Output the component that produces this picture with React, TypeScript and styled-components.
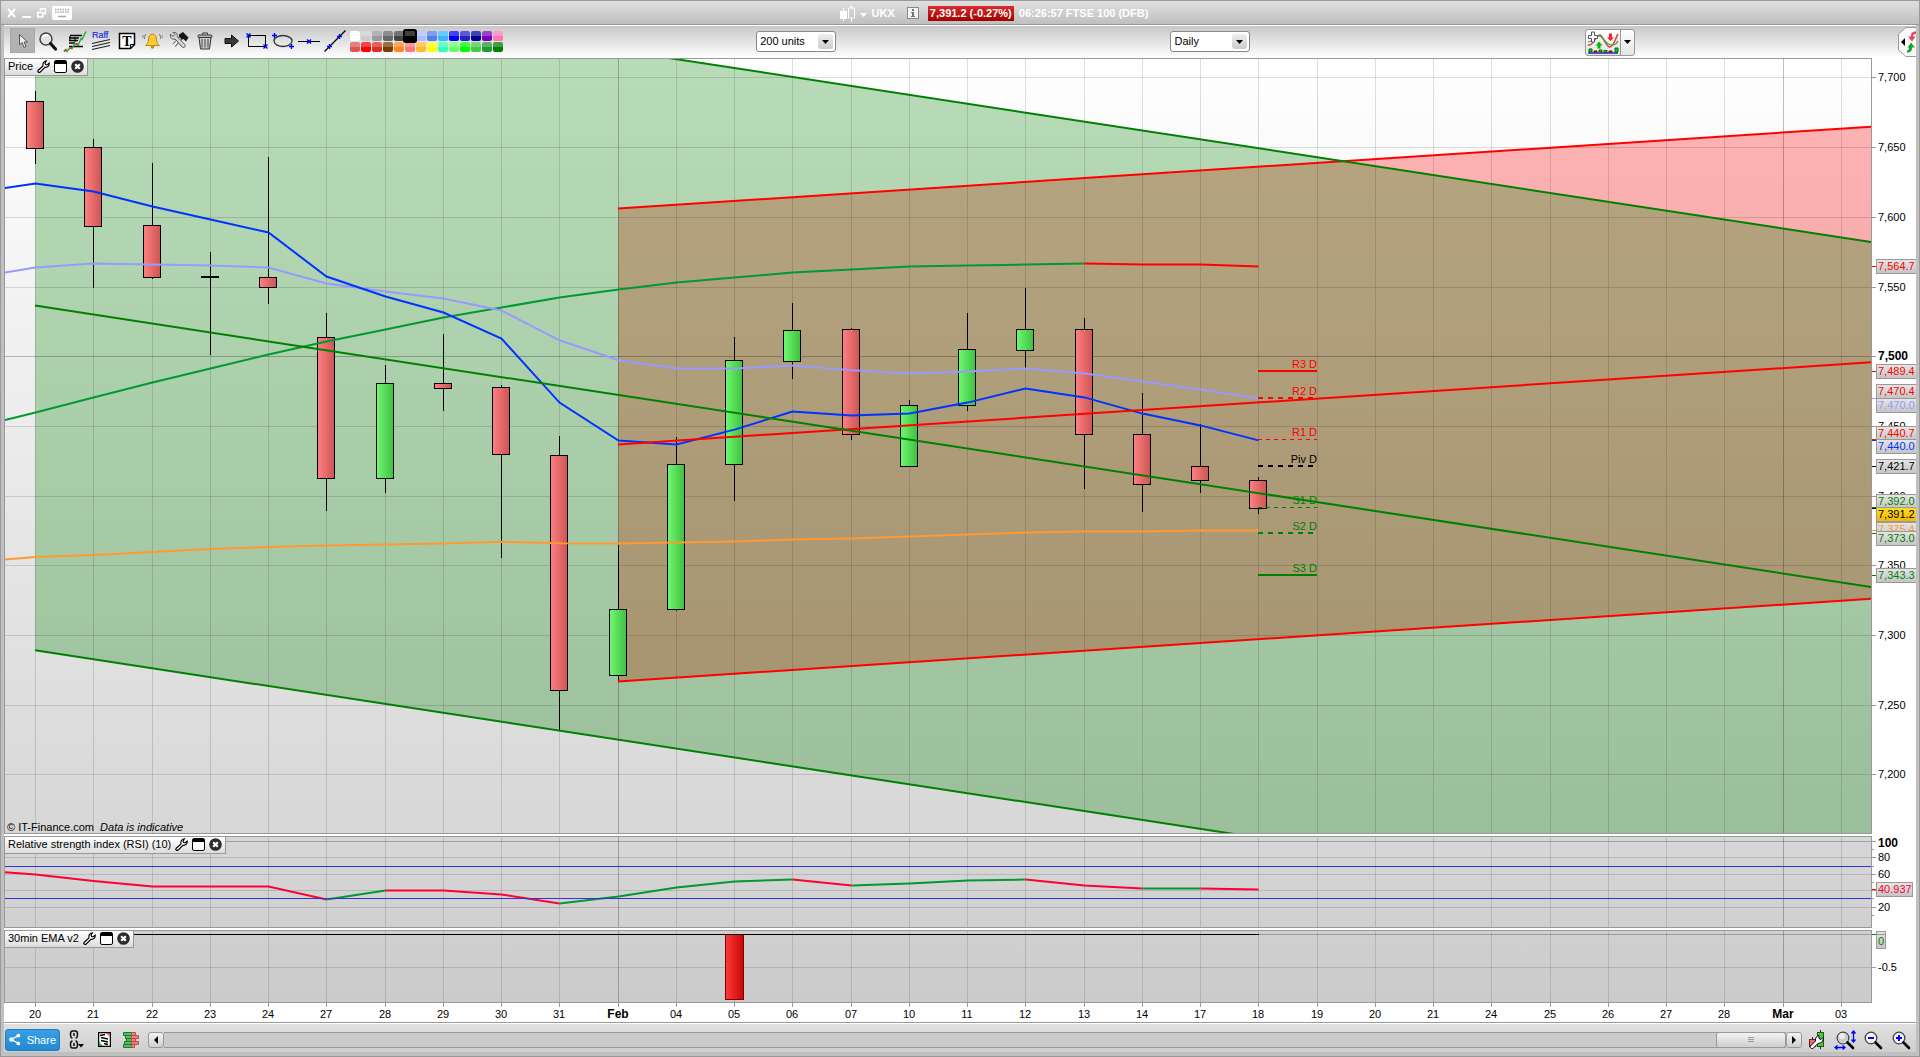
import React, { useLayoutEffect, useRef, useState } from "react";
import styled, { createGlobalStyle, css } from "styled-components";

const FONT = '"Liberation Sans", Arial, Helvetica, sans-serif';

const GlobalStyle = createGlobalStyle`
  * { box-sizing: border-box; }
  body { margin: 0; font: 11px ${FONT}; color: #000; background: #c0c0c0; }
  button, select { font: inherit; color: inherit; }
`;

/* ---------- shell ---------- */

const Window = styled.div`
  display: flex;
  flex-direction: column;
  height: 100vh;
  min-height: 480px;
  min-width: 1180px;
  border: 1px solid #999;
  background: #c0c0c0;
`;

const TitleBar = styled.header`
  display: grid;
  grid-template-columns: 1fr auto 1fr;
  align-items: center;
  height: 24px;
  padding: 1px 6px 0;
  border-bottom: 1px solid #999;
  background: linear-gradient(#e0e0e0, #bfbfbf);
`;

const WindowButtons = styled.div`
  display: flex;
  align-items: center;
  gap: 6px;
`;

const PlainButton = styled.button`
  display: inline-flex;
  align-items: center;
  justify-content: center;
  padding: 0;
  border: 0;
  background: none;
  cursor: pointer;
`;

const Title = styled.h1`
  display: flex;
  align-items: center;
  margin: 0;
  padding-left: 68px;
  font-size: 11px;
  font-weight: bold;
  line-height: 15px;
  color: #fff;
`;

const SymbolName = styled.span`
  margin: 0 12px 0 4px;
`;

const Quote = styled.span`
  margin: 0 5px 0 9px;
  padding: 0 2px;
  background: linear-gradient(#dc2a2a, #a00000);
`;

const Body = styled.main`
  flex: 1;
  display: flex;
  flex-direction: column;
  min-height: 0;
  margin: 0 3px 4px;
  background: #fff;
`;

/* ---------- top toolbar ---------- */

const Toolbar = styled.div`
  flex: none;
  display: flex;
  align-items: center;
  height: 33px;
  padding-left: 6px;
  border-top: 1px solid #fff;
  background: linear-gradient(#c8c8c8, #ffffff);
`;

const ToolGroup = styled.div`
  display: flex;
  gap: 1px;
  margin-bottom: 3px;
`;

const ToolButton = styled(PlainButton)<{ $active?: boolean }>`
  width: 25px;
  height: 25px;
  ${(p) => p.$active && css`background: #b2b2b2; box-shadow: inset 0 0 0 1px #a8a8a8;`}
`;

const Palette = styled.div`
  display: grid;
  grid-template-columns: repeat(14, 10px);
  gap: 1px;
  margin: 0 0 1px 3px;
`;

const Swatch = styled.button<{ $color: string; $selected?: boolean }>`
  width: 10px;
  height: 10px;
  padding: 0;
  border: 0;
  border-radius: 2px;
  background: linear-gradient(rgba(255, 255, 255, 0.25) 50%, transparent 50%) ${(p) => p.$color};
  ${(p) => p.$selected && css`position: relative; border-radius: 1px; box-shadow: 0 0 0 2px #000;`}
`;

const Spacer = styled.div<{ $grow: number }>`
  flex: ${(p) => p.$grow} 1 0;
`;

const Dropdown = styled.label`
  display: flex;
  position: relative;
  margin-bottom: 1px;
`;

const Select = styled.select`
  appearance: none;
  width: 80px;
  height: 21px;
  padding: 0 20px 1px 3px;
  border: 1px solid #888;
  border-radius: 3px;
  background: #fff;
`;

const DropdownArrow = styled.span`
  position: absolute;
  top: 3px;
  right: 3px;
  display: flex;
  align-items: center;
  justify-content: center;
  width: 15px;
  height: 15px;
  border-radius: 3px;
  background: linear-gradient(#eee, #ccc);
  pointer-events: none;
`;

const SplitButton = styled.div`
  display: flex;
  height: 27px;
  border: 1px solid #999;
  border-radius: 3px;
  background: linear-gradient(#fff, #e4e4e4);
`;

const SplitPart = styled(PlainButton)<{ $wide?: boolean }>`
  width: ${(p) => (p.$wide ? 35 : 13)}px;
  ${(p) => p.$wide && css`border-right: 1px solid #999;`}
`;

/* ---------- chart panels ---------- */

const Panel = styled.section<{ $height?: number; $last?: boolean }>`
  position: relative;
  ${(p) => (p.$height ? css`flex: none; height: ${p.$height}px;` : css`flex: 1; min-height: 0;`)}
  margin-bottom: ${(p) => (p.$last ? 0 : 2)}px;
`;

const ChartSvg = styled.svg`
  display: block;
  width: 100%;
  height: 100%;
  font: 11px ${FONT};
`;

const Caption = styled.div`
  position: absolute;
  top: 0;
  left: 0;
  display: flex;
  align-items: flex-start;
  gap: 4px;
  height: 18px;
  padding: 1px 3px;
  border: 1px solid #999;
  background: linear-gradient(#fff, #dcdcdc);
  white-space: pre;
`;

const CaptionTitle = styled.h2`
  margin: 0;
  font-size: 11px;
  font-weight: normal;
  line-height: 13px;
`;

const Credit = styled.p`
  position: absolute;
  left: 3px;
  bottom: 1px;
  margin: 0;
  font-size: 11px;
  line-height: 12px;
  white-space: pre;
`;

const TimeAxisRow = styled.div`
  flex: none;
  height: 20px;
  border-bottom: 1px solid #999;
`;

/* ---------- bottom bar ---------- */

const BottomBar = styled.footer`
  flex: none;
  display: flex;
  align-items: center;
  gap: 7px;
  height: 29px;
  padding: 3px 4px 0 1px;
  border-top: 1px solid #fff;
  background: linear-gradient(#e0e0e0, #cfcfcf);
`;

const ShareButton = styled.button`
  display: flex;
  align-items: center;
  gap: 6px;
  width: 55px;
  height: 22px;
  padding: 0 3px;
  border: 1px solid #1c7fc4;
  border-radius: 3px;
  background: linear-gradient(#38a0e6, #2388cf);
  color: #fff;
`;

const FooterButton = styled(PlainButton)<{ $w: number }>`
  width: ${(p) => p.$w}px;
  height: 22px;
`;

const ScrollBar = styled.div`
  flex: 1;
  display: flex;
  height: 16px;
`;

const ScrollTrack = styled.div`
  flex: 1;
  display: flex;
  justify-content: flex-end;
  border: solid #999;
  border-width: 1px 0;
  background: #cbcbcb;
`;

const scrollFace = css`
  border: 1px solid #999;
  border-radius: 3px;
  background: linear-gradient(#f4f4f4, #cfcfcf);
`;

const ScrollButton = styled(PlainButton)`
  width: 16px;
  ${scrollFace}
`;

const ScrollThumb = styled.div`
  display: flex;
  flex-direction: column;
  align-items: center;
  justify-content: center;
  gap: 1px;
  width: 70px;
  margin: -1px 0;
  ${scrollFace}
`;

const Grip = styled.i`
  width: 6px;
  height: 1px;
  background: #999;
`;

const ZoomGroup = styled.div`
  display: flex;
  gap: 6px;
  margin-left: -3px;
`;

/* ---------- chart geometry ---------- */

/* The series below are stored on a 1920-wide drawing sheet; each panel
   maps them to whatever room it has been given. */
const SHEET_LEFT = 4;
const SHEET_PLOT = 1868;
const AXIS_WIDTH = 44;
const MINOR = 0.13;
const MAJOR = 0.25;

const DAYS = [
  "20", "21", "22", "23", "24", "27", "28", "29", "30", "31", "Feb", "04", "05", "06", "07", "10",
  "11", "12", "13", "14", "17", "18", "19", "20", "21", "24", "25", "26", "27", "28", "Mar", "03",
];
const dayX = (i: number) => Math.floor(35.5 + 58.25 * i);

type Point = [number, number];
const series = (start: number, ys: number[], first = 0): Point[] => [
  ...(first ? ([[5, first]] as Point[]) : []),
  ...ys.map((y, i): Point => [dayX(start + i) + 0.5, y]),
];

// high, body top, body bottom, low, rising
type Candle = [number, number, number, number, boolean];
const CANDLES: Candle[] = [
  [91, 101, 149, 164, false],
  [139, 147, 227, 288, false],
  [163, 225, 278, 279, false],
  [252, 276, 278, 355, false],
  [157, 277, 288, 304, false],
  [313, 337, 479, 511, false],
  [365, 383, 479, 493, true],
  [334, 383, 389, 411, false],
  [385, 387, 455, 558, false],
  [436, 455, 691, 731, false],
  [545, 609, 676, 682, true],
  [437, 464, 610, 611, true],
  [337, 360, 465, 501, true],
  [303, 330, 362, 379, true],
  [328, 329, 435, 440, false],
  [400, 405, 467, 467, true],
  [313, 349, 406, 411, true],
  [288, 329, 351, 368, true],
  [318, 329, 435, 489, false],
  [393, 434, 485, 512, false],
  [424, 466, 481, 493, false],
  [477, 480, 509, 514, false],
];

const LINES: { color: string; points: Point[] }[] = [
  {
    color: "#ff9933",
    points: series(0, [557, 555, 552, 549, 547, 545.5, 544.5, 543.5, 541.7, 543.3, 543.5, 542.6, 541.5, 539.6, 538.4, 536.6, 534.6, 532.6, 531.5, 531.5, 530.6, 530.5], 559.5),
  },
  {
    color: "#009933",
    points: series(0, [412.5, 397.5, 382.5, 368.5, 354.5, 341.5, 329.5, 317.5, 307.5, 297.5, 289.5, 282.5, 277.5, 272.5, 269.5, 266.5, 265.5, 264.5, 263.5], 420),
  },
  { color: "#ff0000", points: series(18, [263.5, 264.5, 264.5, 266.5]) },
  {
    color: "#9999ff",
    points: series(0, [267.5, 263.5, 264.5, 265.5, 267.5, 283.5, 291.5, 298.5, 310.5, 340.3, 360.3, 368.5, 368.5, 365.6, 370.3, 373.4, 371.5, 368.4, 373.6, 381.5, 389.5, 398.4], 272.5),
  },
  {
    color: "#0033ff",
    points: series(0, [183.5, 191.5, 206.5, 219.5, 232.5, 276.5, 296.5, 312.5, 338.5, 402.6, 440.5, 444.4, 429.6, 411.6, 415.5, 413.6, 402.6, 388.5, 397.4, 413.6, 425.4, 440.4], 188),
  },
];

const GREEN_CHANNEL: [Point, Point][] = [
  [[35, -39], [1871, 242]],
  [[35, 305.6], [1871, 587]],
  [[35, 650.3], [1871, 931.6]],
];
const RED_CHANNEL: [Point, Point][] = [
  [[618, 208.6], [1871, 126.7]],
  [[618, 444.4], [1871, 362.3]],
  [[618, 681.4], [1871, 598.8]],
];

const PIVOTS = [
  { name: "R3 D", y: 371, color: "#ff0000", w: 2, dash: "" },
  { name: "R2 D", y: 398, color: "#ff0000", w: 2, dash: "5 5" },
  { name: "R1 D", y: 439.5, color: "#ff0000", w: 1, dash: "4 4" },
  { name: "Piv D", y: 466, color: "#000000", w: 2, dash: "5 5" },
  { name: "S1 D", y: 507.5, color: "#008000", w: 1, dash: "4 4" },
  { name: "S2 D", y: 533, color: "#008000", w: 2, dash: "5 5" },
  { name: "S3 D", y: 575, color: "#008000", w: 2, dash: "" },
];

const PRICE_LEVELS = [
  { label: "7,700", y: 77 }, { label: "7,650", y: 147 }, { label: "7,600", y: 217 },
  { label: "7,550", y: 287 }, { label: "7,500", y: 356, major: true }, { label: "7,450", y: 426 },
  { label: "7,400", y: 496 }, { label: "7,350", y: 565 }, { label: "7,300", y: 635 },
  { label: "7,250", y: 705 }, { label: "7,200", y: 774 },
];

const PRICE_TAGS = [
  { label: "7,564.7", top: 259, mark: 266, color: "#ff0000" },
  { label: "7,489.4", top: 364, mark: 371, color: "#ff0000" },
  { label: "7,470.4", top: 384, mark: 398, color: "#ff0000" },
  { label: "7,470.0", top: 398, mark: 398, color: "#9999ff" },
  { label: "7,440.7", top: 426, mark: 439, color: "#ff0000" },
  { label: "7,440.0", top: 439, mark: 440, color: "#0033ff" },
  { label: "7,421.7", top: 459, mark: 466, color: "#000000" },
  { label: "7,375.4", top: 522, mark: 530, color: "#ff9933" },
  { label: "7,392.0", top: 494, mark: 507, color: "#008000" },
  { label: "7,391.2", top: 507, mark: 508, color: "#000000", live: true },
  { label: "7,373.0", top: 531, mark: 533, color: "#008000" },
  { label: "7,343.3", top: 568, mark: 575, color: "#008000" },
];

const RED = "#ff0033";
const GREEN = "#009933";
const RSI_VALUES = [874.5, 881, 886.5, 886.5, 886.5, 899.4, 890.5, 890.5, 894.5, 903.5, 896.6, 887.5, 881.5, 879.5, 885.5, 883.4, 880.5, 879.5, 885.4, 888.5, 888.5, 889.5];
const RSI_RUNS = [
  { from: 0, to: 5, color: RED, lead: 872.2 },
  { from: 5, to: 6, color: GREEN },
  { from: 6, to: 9, color: RED },
  { from: 9, to: 13, color: GREEN },
  { from: 13, to: 14, color: RED },
  { from: 14, to: 17, color: GREEN },
  { from: 17, to: 19, color: RED },
  { from: 19, to: 20, color: GREEN },
  { from: 20, to: 21, color: RED },
];

interface Box { w: number; h: number }

function useBox() {
  const ref = useRef<HTMLElement | null>(null);
  const [box, setBox] = useState<Box>({ w: 1912, h: 100 });
  useLayoutEffect(() => {
    const el = ref.current;
    if (!el) return;
    const read = () => setBox({ w: el.clientWidth, h: el.clientHeight });
    read();
    const watcher = new ResizeObserver(read);
    watcher.observe(el);
    return () => watcher.disconnect();
  }, []);
  return [ref, box] as const;
}

function scales(box: Box, top: number, sheetHeight: number) {
  const kx = (box.w - AXIS_WIDTH) / SHEET_PLOT;
  const ky = box.h / sheetHeight;
  const x = (v: number) => (v - SHEET_LEFT) * kx;
  const y = (v: number) => (v - top) * ky;
  return {
    x, y,
    px: (v: number) => Math.round(x(v)) + 0.5,
    py: (v: number) => Math.round(y(v)) + 0.5,
    path: (pts: Point[]) => pts.map((p) => `${x(p[0])},${y(p[1])}`).join(" "),
    plot: box.w - AXIS_WIDTH,
  };
}

type Scales = ReturnType<typeof scales>;

function Frame({ id, s, box, from, to }: { id: string; s: Scales; box: Box; from: string; to: string }) {
  return (
    <>
      <defs>
        <linearGradient id={`${id}-bg`} x1="0" y1="0" x2="0" y2="1">
          <stop offset="0" stopColor={from} />
          <stop offset="1" stopColor={to} />
        </linearGradient>
        <clipPath id={`${id}-clip`}>
          <rect x={1} y={1} width={s.plot - 2} height={box.h - 2} />
        </clipPath>
      </defs>
      <rect x={0.5} y={0.5} width={s.plot - 1} height={box.h - 1} fill={`url(#${id}-bg)`} stroke="#999" />
    </>
  );
}

function DayGrid({ s, h }: { s: Scales; h: number }) {
  return (
    <>
      {DAYS.map((d, i) => (
        <line key={i} x1={s.px(dayX(i))} x2={s.px(dayX(i))} y1={0} y2={h} stroke="#000" strokeOpacity={d.length > 2 ? MAJOR : MINOR} />
      ))}
    </>
  );
}

function AxisTick({ s, y, color = "#999", short }: { s: Scales; y: number; color?: string; short?: boolean }) {
  return <line x1={s.plot} x2={s.plot + (short ? 2 : 4)} y1={s.py(y)} y2={s.py(y)} stroke={color} />;
}

function Tag({ s, top, width = 41, label, color, live, height = 15 }: { s: Scales; top: number; width?: number; label: string; color: string; live?: boolean; height?: number }) {
  const y = Math.round(s.y(top));
  return (
    <g>
      <rect x={s.plot + 4.5} y={y + 0.5} width={width - 1} height={height - 1} fill={live ? "url(#live-tag)" : "url(#tag)"} stroke="#999" />
      <text x={s.plot + 6} y={y + height - 4} fill={color}>{label}</text>
    </g>
  );
}

function PriceChart() {
  const [ref, box] = useBox();
  const s = scales(box, 58, 776);
  const fill = (ch: [Point, Point][]) => s.path([ch[0][0], ch[0][1], ch[2][1], ch[2][0]]);
  return (
    <Panel ref={ref as React.RefObject<HTMLElement>} aria-label="Price">
      <ChartSvg>
        <Frame id="price" s={s} box={box} from="#ffffff" to="#d7d7d7" />
        <defs>
          <linearGradient id="bear"><stop offset="0" stopColor="#ff8080" /><stop offset="1" stopColor="#cc5555" /></linearGradient>
          <linearGradient id="bull"><stop offset="0" stopColor="#70f870" /><stop offset="1" stopColor="#40c040" /></linearGradient>
          <linearGradient id="tag" x1="0" y1="0" x2="0" y2="1"><stop offset="0" stopColor="#e6e6e6" /><stop offset="1" stopColor="#c4c4c4" /></linearGradient>
          <linearGradient id="live-tag" x1="0" y1="0" x2="0" y2="1"><stop offset="0" stopColor="#ffdd22" /><stop offset="1" stopColor="#f4b800" /></linearGradient>
        </defs>
        <g clipPath="url(#price-clip)">
          <polygon points={fill(RED_CHANNEL)} fill="#f00" fillOpacity={0.29} />
          <polygon points={fill(GREEN_CHANNEL)} fill="#008000" fillOpacity={0.28} />
          <DayGrid s={s} h={box.h} />
          {PRICE_LEVELS.map((l) => (
            <line key={l.label} x1={0} x2={s.plot} y1={s.py(l.y)} y2={s.py(l.y)} stroke="#000" strokeOpacity={l.major ? MAJOR : MINOR} />
          ))}
          {CANDLES.map(([high, top, bottom, low, up], i) => {
            const cx = s.px(dayX(i));
            const t = Math.round(s.y(top));
            const b = Math.round(s.y(bottom));
            return (
              <g key={i} stroke="#000">
                <line x1={cx} x2={cx} y1={s.y(high)} y2={s.y(low)} />
                {b - t > 2
                  ? <rect x={cx - 9} y={t + 0.5} width={17} height={b - t - 1} fill={up ? "url(#bull)" : "url(#bear)"} />
                  : <rect x={cx - 9.5} y={t} width={18} height={2} fill="#000" stroke="none" />}
              </g>
            );
          })}
          {LINES.map((l, i) => (
            <polyline key={i} points={s.path(l.points)} fill="none" stroke={l.color} strokeWidth={2} />
          ))}
          {[...RED_CHANNEL.map((p) => ({ p, c: "#ff0000" })), ...GREEN_CHANNEL.map((p) => ({ p, c: "#008000" }))].map(({ p, c }, i) => (
            <polyline key={i} points={s.path(p)} fill="none" stroke={c} strokeWidth={2} />
          ))}
          {PIVOTS.map((p) => (
            <g key={p.name}>
              <line x1={s.x(1258)} x2={s.x(1317)} y1={s.y(p.y)} y2={s.y(p.y)} stroke={p.color} strokeWidth={p.w} strokeDasharray={p.dash || undefined} />
              <text x={s.x(1317)} y={s.y(Math.floor(p.y) - 3)} fill={p.color} textAnchor="end">{p.name}</text>
            </g>
          ))}
        </g>
        {PRICE_LEVELS.map((l) => (
          <g key={l.label}>
            <AxisTick s={s} y={l.y} />
            <text x={s.plot + 6} y={s.y(l.y + 4)} fontWeight={l.major ? "bold" : undefined} fontSize={l.major ? 12 : undefined}>{l.label}</text>
          </g>
        ))}
        {PRICE_TAGS.map((t) => (
          <g key={t.label}>
            <AxisTick s={s} y={t.mark} color={t.color} />
            <Tag s={s} top={t.top} label={t.label} color={t.color} live={t.live} />
          </g>
        ))}
      </ChartSvg>
      <PanelCaption title="Price" />
      <Credit>© IT-Finance.com  <em>Data is indicative</em></Credit>
    </Panel>
  );
}

const RSI_LEVELS = [
  { label: "100", y: 841, major: true }, { label: "", y: 849, half: true }, { label: "80", y: 857 },
  { label: "", y: 866, half: true }, { label: "60", y: 874 }, { label: "", y: 882, half: true },
  { label: "", y: 890 }, { label: "", y: 898, half: true }, { label: "20", y: 907 }, { label: "", y: 915, half: true },
];

function RsiChart() {
  const [ref, box] = useBox();
  const s = scales(box, 836, 92);
  return (
    <Panel ref={ref as React.RefObject<HTMLElement>} $height={92} aria-label="Relative strength index">
      <ChartSvg>
        <Frame id="rsi" s={s} box={box} from="#d7d7d7" to="#d0d0d0" />
        <g clipPath="url(#rsi-clip)">
          <DayGrid s={s} h={box.h} />
          {RSI_LEVELS.filter((l) => !l.half).map((l) => (
            <line key={l.y} x1={0} x2={s.plot} y1={s.py(l.y)} y2={s.py(l.y)} stroke="#000" strokeOpacity={l.major ? MAJOR : MINOR} />
          ))}
          {RSI_RUNS.map((r) => (
            <polyline key={r.from} points={s.path(series(r.from, RSI_VALUES.slice(r.from, r.to + 1), r.lead))} fill="none" stroke={r.color} strokeWidth={2} />
          ))}
          {[866, 898].map((y) => (
            <line key={y} x1={0} x2={s.plot} y1={s.py(y)} y2={s.py(y)} stroke="#3333dd" />
          ))}
        </g>
        {RSI_LEVELS.map((l) => (
          <g key={l.y}>
            <AxisTick s={s} y={l.y} short={l.half} />
            <text x={s.plot + 6} y={s.y(l.y + (l.major ? 6 : 4))} fontWeight={l.major ? "bold" : undefined} fontSize={l.major ? 12 : undefined}>{l.label}</text>
          </g>
        ))}
        <AxisTick s={s} y={889} color={RED} />
        <Tag s={s} top={882} width={37} label="40.937" color={RED} />
      </ChartSvg>
      <PanelCaption title="Relative strength index (RSI) (10)" />
    </Panel>
  );
}

function EmaChart() {
  const [ref, box] = useBox();
  const s = scales(box, 930, 73);
  return (
    <Panel ref={ref as React.RefObject<HTMLElement>} $height={73} $last aria-label="30min EMA v2">
      <ChartSvg>
        <defs>
          <linearGradient id="ema-bar"><stop offset="0" stopColor="#ff3838" /><stop offset="1" stopColor="#c80808" /></linearGradient>
        </defs>
        <Frame id="ema" s={s} box={box} from="#d0d0d0" to="#cbcbcb" />
        <g clipPath="url(#ema-clip)">
          <DayGrid s={s} h={box.h} />
          <line x1={0} x2={s.plot} y1={s.py(934)} y2={s.py(934)} stroke="#000" strokeOpacity={MAJOR} />
          <line x1={0} x2={s.plot} y1={s.py(967)} y2={s.py(967)} stroke="#000" strokeOpacity={MINOR} />
          <rect x={s.px(dayX(12)) - 9} y={s.py(934)} width={18} height={s.y(999) - s.y(934)} fill="url(#ema-bar)" stroke="#800000" />
          <line x1={0} x2={s.x(1259)} y1={s.py(934)} y2={s.py(934)} stroke="#000" />
        </g>
        <AxisTick s={s} y={967} />
        <text x={s.plot + 6} y={s.y(971)}>-0.5</text>
        <AxisTick s={s} y={934} color="#008000" />
        <Tag s={s} top={931} width={10} height={18} label="0" color="#008000" />
        <line x1={s.plot + 4} x2={s.plot + 14} y1={s.py(934)} y2={s.py(934)} stroke="#999" />
      </ChartSvg>
      <PanelCaption title="30min EMA v2" />
    </Panel>
  );
}

function TimeAxis() {
  const [ref, box] = useBox();
  const s = scales({ w: box.w, h: 19 }, 1003, 19);
  return (
    <TimeAxisRow ref={ref as React.RefObject<HTMLDivElement>}>
      <ChartSvg>
        {DAYS.map((d, i) => (
          <g key={i}>
            <line x1={s.px(dayX(i))} x2={s.px(dayX(i))} y1={0} y2={4} stroke="#999" />
            <text x={s.x(dayX(i))} y={15} textAnchor="middle" fontWeight={d.length > 2 ? "bold" : undefined} fontSize={d.length > 2 ? 12 : undefined}>{d}</text>
          </g>
        ))}
      </ChartSvg>
    </TimeAxisRow>
  );
}

/* ---------- icons ---------- */

const Caret = ({ color = "#000" }: { color?: string }) => (
  <svg width="7" height="4"><path d="M0 0h7L3.5 4z" fill={color} /></svg>
);

function PanelCaption({ title }: { title: string }) {
  return (
    <Caption>
      <CaptionTitle>{title}</CaptionTitle>
      <PlainButton aria-label={`${title} settings`}>
        <svg width="13" height="13" viewBox="0 0 13 13">
          <path d="M1 10.500 6 6C5.400 3.600 6.600 1.200 9.400.8L8 3.200l.6 1.300 1.500.3L12.200 3c.4 3-1.800 4.800-4.300 4.300L3 12.200c-1.300.6-2.600-.6-2-1.700z" fill="#fff" stroke="#000" strokeWidth="1.100" />
        </svg>
      </PlainButton>
      <PlainButton aria-label={`Detach ${title}`}>
        <svg width="13" height="13"><rect x=".5" y=".5" width="12" height="12" rx="1.500" fill="#fff" stroke="#000" /><path d="M1 1h11v3H1z" /></svg>
      </PlainButton>
      <PlainButton aria-label={`Close ${title}`}>
        <svg width="13" height="13"><circle cx="6.500" cy="6.500" r="6.300" fill="#2c2c2c" /><path d="M4.200 4.200l4.600 4.600M8.800 4.200 4.200 8.800" stroke="#fff" strokeWidth="2.200" /></svg>
      </PlainButton>
    </Caption>
  );
}

const Icon = ({ children }: { children: React.ReactNode }) => (
  <svg width="25" height="25" viewBox="0 0 25 25">{children}</svg>
);

const BLUE = "#0000ff";

const TOOLS: { name: string; art: React.ReactNode }[] = [
  { name: "Pointer", art: <path d="M9.500 6.500v10.500l2.500-2.500 2 5 2-1-2-4.500h3.500z" fill="#eee" stroke="#555" /> },
  {
    name: "Zoom",
    art: (
      <>
        <circle cx="10" cy="11" r="6" fill="#e2e2e2" stroke="#444" strokeWidth="1.500" />
        <path d="M6.500 9.500c1-2.500 4-3 5.500-2" stroke="#fff" strokeWidth="2" fill="none" />
        <path d="M14.500 15.500l5 5.500" stroke="#111" strokeWidth="3.200" strokeLinecap="round" />
      </>
    ),
  },
  {
    name: "Indicators",
    art: (
      <>
        <path d="M8 7.500h12M7 10h10M7 12.500h9M7 15h6M7 18.500h14" stroke="#000" strokeWidth="1.400" />
        <path d="M8 8v4M13 9v5" stroke="#000" />
        <path d="M2 23.500l2-2 1 2 3-4 2 1 3-5 3 2 3-7 1 1 4-8" stroke="#1eb43c" strokeWidth="1.500" fill="none" />
        <path d="M2 23.500l2-2M8 19.500l2 1M14 15.500l2 1" stroke="#f22" strokeWidth="1.500" />
      </>
    ),
  },
  {
    name: "Raff channel",
    art: (
      <>
        <text x="4" y="10" fontSize="9" fill="#1a2fe0" stroke="#1a2fe0" strokeWidth=".2" fontFamily={FONT}>Raff</text>
        <path d="M4 15.500l18-4M4 18.500l18-4M4 21.500l18-4" stroke="#222" strokeWidth="1.200" />
      </>
    ),
  },
  {
    name: "Text",
    art: (
      <>
        <path d="M5.500 5.500h15v11l-4 4h-11z" fill="#fff" stroke="#000" strokeWidth="1.500" />
        <path d="M20.500 16.500h-4v4" fill="none" stroke="#000" />
        <text x="13" y="18" textAnchor="middle" fontSize="14" fontWeight="bold" fontFamily='"Liberation Serif", serif'>T</text>
      </>
    ),
  },
  {
    name: "Alert",
    art: (
      <>
        <path d="M12.500 6c-3 .5-4 3-4 6 0 2.500-1.500 4-3 5.500h14c-1.500-1.500-3-3-3-5.500 0-3-1-5.500-4-6z" fill="#fc3" stroke="#b58a10" />
        <circle cx="12.500" cy="19" r="1.800" fill="#c89010" />
        <path d="M6 6c-1 1-2 3-1.500 5M3.500 7c-.8 1-1 2-.8 3M19 6c1 1 2 3 1.500 5M21.500 7c.8 1 1 2 .8 3" stroke="#777" fill="none" />
      </>
    ),
  },
  {
    name: "Tools",
    art: (
      <>
        <path d="M8 17.500l7-8" stroke="#444" strokeWidth="4" />
        <path d="M6.500 19l8-9" stroke="#f2f2f2" strokeWidth="2.500" />
        <path d="M13 6.500l4-2.500 5.500 5.500-2.500 4-2.500-2.500-1.500.5-3-3z" fill="#151515" />
        <path d="M4.500 6l2.500 2.500L9 6.500 7 4.500c3-.8 5 1.500 4.200 4l7.500 8c1.500 2-.7 4-2.500 2.500l-7-8c-3 1-5.500-1.500-4.700-5z" fill="#d8d8d8" stroke="#555" />
      </>
    ),
  },
  {
    name: "Delete",
    art: (
      <>
        <path d="M7 9.500h12l-1.500 11.500h-9z" fill="#ccc" stroke="#333" />
        <path d="M10 11v8.500M13 11v8.500M16 11v8.500" stroke="#444" />
        <rect x="6" y="7" width="14" height="2.500" rx="1" fill="#bbb" stroke="#333" />
        <path d="M10.500 6.500v-1.500h5v1.500" fill="none" stroke="#333" />
      </>
    ),
  },
  { name: "Arrow", art: <path d="M7 10.500h6.500v-3.500l7 6-7 6v-3.500H7z" fill="#3a3a3a" stroke="#111" /> },
  {
    name: "Rectangle",
    art: (
      <>
        <rect x="4.500" y="7.500" width="17" height="11" fill="none" stroke="#000" />
        <path d="M2.500 5.500l4 4m0-4l-4 4M19.500 16.500l4 4m0-4l-4 4" stroke={BLUE} strokeWidth="1.400" />
      </>
    ),
  },
  {
    name: "Ellipse",
    art: (
      <>
        <ellipse cx="13" cy="13" rx="9" ry="5.500" fill="none" stroke="#333" strokeWidth="1.300" />
        <path d="M2 7.500h5M4.500 5v5M19 18.500h5M21.500 16v5" stroke={BLUE} strokeWidth="1.400" />
      </>
    ),
  },
  {
    name: "Horizontal line",
    art: (
      <>
        <path d="M2 13.500h22" stroke="#000" />
        <path d="M11 11.500l4 4m0-4l-4 4" stroke={BLUE} strokeWidth="1.400" />
      </>
    ),
  },
  {
    name: "Line",
    art: (
      <>
        <path d="M2.500 23.500l21-21" stroke="#000" strokeWidth="1.300" />
        <path d="M5 18.500h5M7.500 16v5M15 8.500h5M17.500 6v5" stroke={BLUE} strokeWidth="1.400" />
      </>
    ),
  },
];

const COLORS = [
  "#ffffff", "#cccccc", "#999999", "#666666", "#444444", "#000000", "#a8bcff", "#4d7dee", "#33b8ff", "#0000ff", "#2222cc", "#000099", "#7700bb", "#ff77bb",
  "#dd5555", "#ff0000", "#e02c22", "#773c00", "#ff8822", "#ff7777", "#ffb833", "#ffff00", "#33ffbb", "#66ff66", "#00ff00", "#44cc44", "#229933", "#008000",
];

const Magnifier = ({ children }: { children?: React.ReactNode }) => (
  <svg width="22" height="22" viewBox="0 0 22 22">
    <circle cx="9" cy="9" r="5.800" fill="#f4f4f4" stroke="#444" strokeWidth="1.300" />
    {children}
    <path d="M13.500 13.500l5.500 5.500" stroke="#000" strokeWidth="2.600" strokeLinecap="round" />
  </svg>
);

/* ---------- page ---------- */

function TopTitle() {
  return (
    <TitleBar>
      <WindowButtons>
        <PlainButton aria-label="Close"><svg width="9" height="10"><path d="M1 1l7 8M8 1L1 9" stroke="#fff" strokeWidth="2" /></svg></PlainButton>
        <PlainButton aria-label="Minimise"><svg width="9" height="10"><path d="M0 9h9" stroke="#fff" strokeWidth="2" /></svg></PlainButton>
        <PlainButton aria-label="Restore"><svg width="9" height="10"><path d="M3.500 3V.8h5v4.700H6M.8 4.500h5V9h-5z" fill="none" stroke="#fff" strokeWidth="1.500" /></svg></PlainButton>
        <PlainButton aria-label="Keyboard">
          <svg width="20" height="14">
            <rect width="20" height="14" rx="2" fill="#fff" />
            <path d="M3 3.500h14M3 6h14" stroke="#aaa" strokeDasharray="1.500 1" strokeWidth="1.500" />
            <path d="M6 10.500h8" stroke="#aaa" strokeWidth="1.500" />
          </svg>
        </PlainButton>
      </WindowButtons>
      <Title>
        <PlainButton aria-label="Chart type">
          <svg width="28" height="17" viewBox="0 0 28 17">
            <path d="M3.500 3v13M11.500 0v3M11.500 13v4" stroke="#fff" />
            <path d="M0 6h7v8H0z" fill="#fff" />
            <path d="M8.500 3h6v10h-6z" fill="none" stroke="#fff" />
            <path d="M20 8h7l-3.500 4z" fill="#fff" />
          </svg>
        </PlainButton>
        <SymbolName>UKX</SymbolName>
        <PlainButton aria-label="Information">
          <svg width="12" height="12">
            <rect x=".5" y=".5" width="11" height="11" fill="#f4f4f4" stroke="#888" />
            <path d="M5 2h2v2H5zM4 5h3v4h1v1H4V9h1V6H4z" fill="#678" />
          </svg>
        </PlainButton>
        <Quote>7,391.2 (-0.27%)</Quote>
        <span>06:26:57 FTSE 100 (DFB)</span>
      </Title>
    </TitleBar>
  );
}

function MainToolbar() {
  return (
    <Toolbar>
      <ToolGroup>
        {TOOLS.map((t, i) => (
          <ToolButton key={t.name} $active={i === 0} aria-label={t.name} aria-pressed={i === 0}>
            <Icon>{t.art}</Icon>
          </ToolButton>
        ))}
      </ToolGroup>
      <Palette>
        {COLORS.map((c, i) => (
          <Swatch key={c} $color={c} $selected={i === 5} aria-label={`Colour ${c}`} />
        ))}
      </Palette>
      <Spacer $grow={25} />
      <Dropdown>
        <Select aria-label="Number of units" defaultValue="200 units">
          <option>200 units</option>
        </Select>
        <DropdownArrow><Caret /></DropdownArrow>
      </Dropdown>
      <Spacer $grow={33} />
      <Dropdown>
        <Select aria-label="Timeframe" defaultValue="Daily">
          <option>Daily</option>
        </Select>
        <DropdownArrow><Caret /></DropdownArrow>
      </Dropdown>
      <Spacer $grow={33} />
      <SplitButton>
        <SplitPart $wide aria-label="Add indicator">
          <svg width="32" height="23" viewBox="0 0 32 23">
            <path d="M1 13l3 2c4-1 5-9 9-11 4 1 5 9 9 12 3-1 5-5 9-6V3c-3 5-4 11-8 12-4-1-6-11-10-11-4 1-5 8-9 9z" fill="#e8e0d8" />
            <path d="M1 14c5 2 7-9 12-10 3 1 6 12 10 12 4-1 5-8 8-13" fill="none" stroke="#d44" strokeWidth="1.500" />
            <path d="M1 11c5 0 7-7 12-6 4 2 7 10 12 9 3 0 5-2 6-4" fill="none" stroke="#3a3" strokeWidth="1.200" />
            <path d="M4.500 1h3v3.500h3v3h-3V11h-3V7.500h-3v-3h3z" fill="#fff" stroke="#556" />
            <path d="M22 2.500h3v4h2l-3.500 3.500L20 6.500h2z" fill="#f22" />
            <path d="M10.500 17.500h3v-3h2L12 10.500 8.500 14.500h2z" fill="#0b0" />
            <path d="M1 22h30" stroke="#22c" strokeWidth="1.500" />
            <path d="M2 18h3v3H2zM12 19h3v2h-3zM17 19.500h3v2h-3zM28 17h3v4h-3z" fill="#0d0" stroke="#060" />
            <path d="M7 20h3v1H7zM22 20h3v1h-3z" fill="#f33" stroke="#800" />
          </svg>
        </SplitPart>
        <SplitPart aria-label="More indicators"><Caret /></SplitPart>
      </SplitButton>
      <Spacer $grow={26} />
      <PlainButton aria-label="Open order panel">
        <svg width="18" height="30" viewBox="0 0 18 30">
          <path d="M18 .5H8L.5 7v16L8 29.500h10" fill="#fafafa" stroke="#999" />
          <path d="M7 11v8l-4-4z" />
          <path d="M18 4.500c-4 0-5 1.500-5 5h-3l4 5 3.500-5H15c0-2 1-2.500 3-2.500z" fill="#ef4455" />
          <path d="M9 25.500c4 0 5-1.500 5-5h3l-4-5-3.500 5H11c0 2-.5 3-2 3z" fill="#17a32c" />
        </svg>
      </PlainButton>
    </Toolbar>
  );
}

function Footer() {
  return (
    <BottomBar>
      <ShareButton>
        <svg width="15" height="15" viewBox="0 0 15 15">
          <path d="M12 2.500L3 7.500l9 5" fill="none" stroke="#fff" strokeWidth="1.500" />
          <circle cx="12" cy="2.500" r="2.400" fill="#fff" /><circle cx="3" cy="7.500" r="2.800" fill="#fff" /><circle cx="12" cy="12.500" r="2.400" fill="#fff" />
        </svg>
        Share
      </ShareButton>
      <FooterButton $w={20} aria-label="Link windows">
        <svg width="16" height="19" viewBox="0 0 16 19">
          <path d="M3.500 8C.8 8 .8 1 3.500 1h3c2.700 0 2.700 7 0 7M5 3v3M3.500 11c-2.700 0-2.700 7 0 7h3c2.700 0 2.700-7 0-7M5 13v3" fill="none" stroke="#111" strokeWidth="1.500" />
          <path d="M9 14h6l-3 3.500z" />
        </svg>
      </FooterButton>
      <FooterButton $w={20} aria-label="Order list">
        <svg width="13" height="15">
          <rect x=".5" y=".5" width="12" height="14" fill="#fff" stroke="#000" strokeWidth="1.500" />
          <path d="M2 3.500l5-1M3 5.500l7 1.500M3 8.500l7 1.500M6 11.500l4 1" stroke="#000" strokeWidth="1.700" />
          <path d="M8 1h4v4z" fill="#e55" /><path d="M1 14v-4l4 4z" fill="#2a4" />
        </svg>
      </FooterButton>
      <FooterButton $w={20} aria-label="Market depth">
        <svg width="16" height="16">
          <path d="M.5.5h8v3h-8zM3.500 6.500h5v3h-5zM.5 12.500h8v3h-8zM2.500 3.500h6v3h-6zM1.500 9.500h7v3h-7z" fill="#4c4" stroke="#364" />
          <path d="M8.500.5h4v3h-4zM8.500 3.500h7v3h-7zM8.500 6.500h4v3h-4zM8.500 9.500h7v3h-7zM8.500 12.500h3v3h-3z" fill="#f77" stroke="#a55" />
        </svg>
      </FooterButton>
      <ScrollBar>
        <ScrollButton aria-label="Scroll left"><svg width="4" height="8"><path d="M4 0v8L0 4z" /></svg></ScrollButton>
        <ScrollTrack>
          <ScrollThumb><Grip /><Grip /><Grip /></ScrollThumb>
        </ScrollTrack>
        <ScrollButton aria-label="Scroll right"><svg width="4" height="8"><path d="M0 0v8l4-4z" /></svg></ScrollButton>
      </ScrollBar>
      <ZoomGroup>
        <FooterButton $w={22} aria-label="Chart settings">
          <svg width="16" height="20" viewBox="0 0 16 20">
            <path d="M3.500 7v12M11.500 0v19" stroke="#222" />
            <rect x=".5" y="9.500" width="6" height="7" fill="#e66" stroke="#622" />
            <rect x="8.500" y="2.500" width="6" height="14" fill="#4c4" stroke="#252" />
            <path d="M1.500 16l5-5c-.5-3 1-5 3.500-5.500v3l2 1 2-2c1 4-2 6-4.500 5.500L4.500 18c-2 1.500-4-.5-3-2z" fill="#fff" stroke="#000" />
          </svg>
        </FooterButton>
        <FooterButton $w={22} aria-label="Fit to screen">
          <Magnifier>
            <circle cx="9" cy="9" r="5.200" fill="#ccc" /><circle cx="8" cy="7" r="3" fill="#eee" />
            <path d="M19.500 3v9M17.500 4.500l2-2.500 2 2.500M17.500 10.500l2 2.500 2-2.500M2 18.500h8M3.500 16.500l-2.500 2 2.500 2M8.500 16.500l2.500 2-2.500 2" fill="none" stroke={BLUE} strokeWidth="1.300" />
          </Magnifier>
        </FooterButton>
        <FooterButton $w={22} aria-label="Zoom out">
          <Magnifier><path d="M6 9h6" stroke={BLUE} strokeWidth="2" /></Magnifier>
        </FooterButton>
        <FooterButton $w={22} aria-label="Zoom in">
          <Magnifier><path d="M6 9h6M9 6v6" stroke={BLUE} strokeWidth="2" /></Magnifier>
        </FooterButton>
      </ZoomGroup>
    </BottomBar>
  );
}

export default function App() {
  return (
    <>
      <GlobalStyle />
      <Window>
        <TopTitle />
        <Body>
          <MainToolbar />
          <PriceChart />
          <RsiChart />
          <EmaChart />
          <TimeAxis />
          <Footer />
        </Body>
      </Window>
    </>
  );
}
